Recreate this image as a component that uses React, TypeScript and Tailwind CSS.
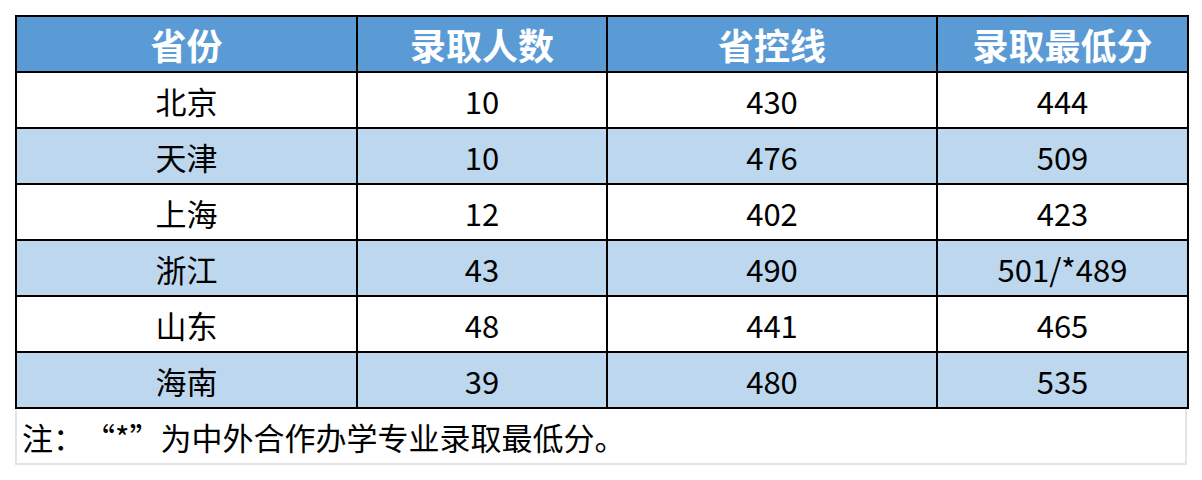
import React from "react";

const rows = [
  ["北京", "10", "430", "444"],
  ["天津", "10", "476", "509"],
  ["上海", "12", "402", "423"],
  ["浙江", "43", "490", "501/*489"],
  ["山东", "48", "441", "465"],
  ["海南", "39", "480", "535"],
];

const headers = ["省份", "录取人数", "省控线", "录取最低分"];

export default function App() {
  return (
    <div
      className="min-h-[480px] w-[1202px] bg-white pl-[15px] pt-[15px]"
      style={{ fontFamily: '"Noto Sans CJK SC", "Noto Sans", sans-serif' }}
    >
      <table className="w-[1172px] table-fixed border-collapse text-black">
        <colgroup>
          <col className="w-[341px]" />
          <col className="w-[250px]" />
          <col className="w-[330px]" />
          <col className="w-[251px]" />
        </colgroup>
        <thead>
          <tr className="h-[56px] bg-[#5b9bd5]">
            {headers.map((h) => (
              <th
                key={h}
                className="border-2 border-black p-0 text-center text-[36px] font-bold leading-none text-white"
              >
                {h}
              </th>
            ))}
          </tr>
        </thead>
        <tbody>
          {rows.map((r, i) => (
            <tr key={r[0]} className={i % 2 === 1 ? "h-[56px] bg-[#bdd7ee]" : "h-[56px] bg-white"}>
              {r.map((c, j) => (
                <td
                  key={j}
                  className="border-2 border-black p-0 text-center text-[31px] leading-none"
                >
                  {c}
                </td>
              ))}
            </tr>
          ))}
        </tbody>
      </table>
      <div className="flex h-[56px] w-[1172px] items-center border-x-2 border-b-2 border-[#e4e4e4] pl-[5px] text-[31px] leading-none text-black">
        <span>注：</span>
        <span className="inline-block w-[31px] text-right">“</span>
        <span>*</span>
        <span className="inline-block w-[31px] text-left">”</span>
        <span>为中外合作办学专业录取最低分。</span>
      </div>
    </div>
  );
}
